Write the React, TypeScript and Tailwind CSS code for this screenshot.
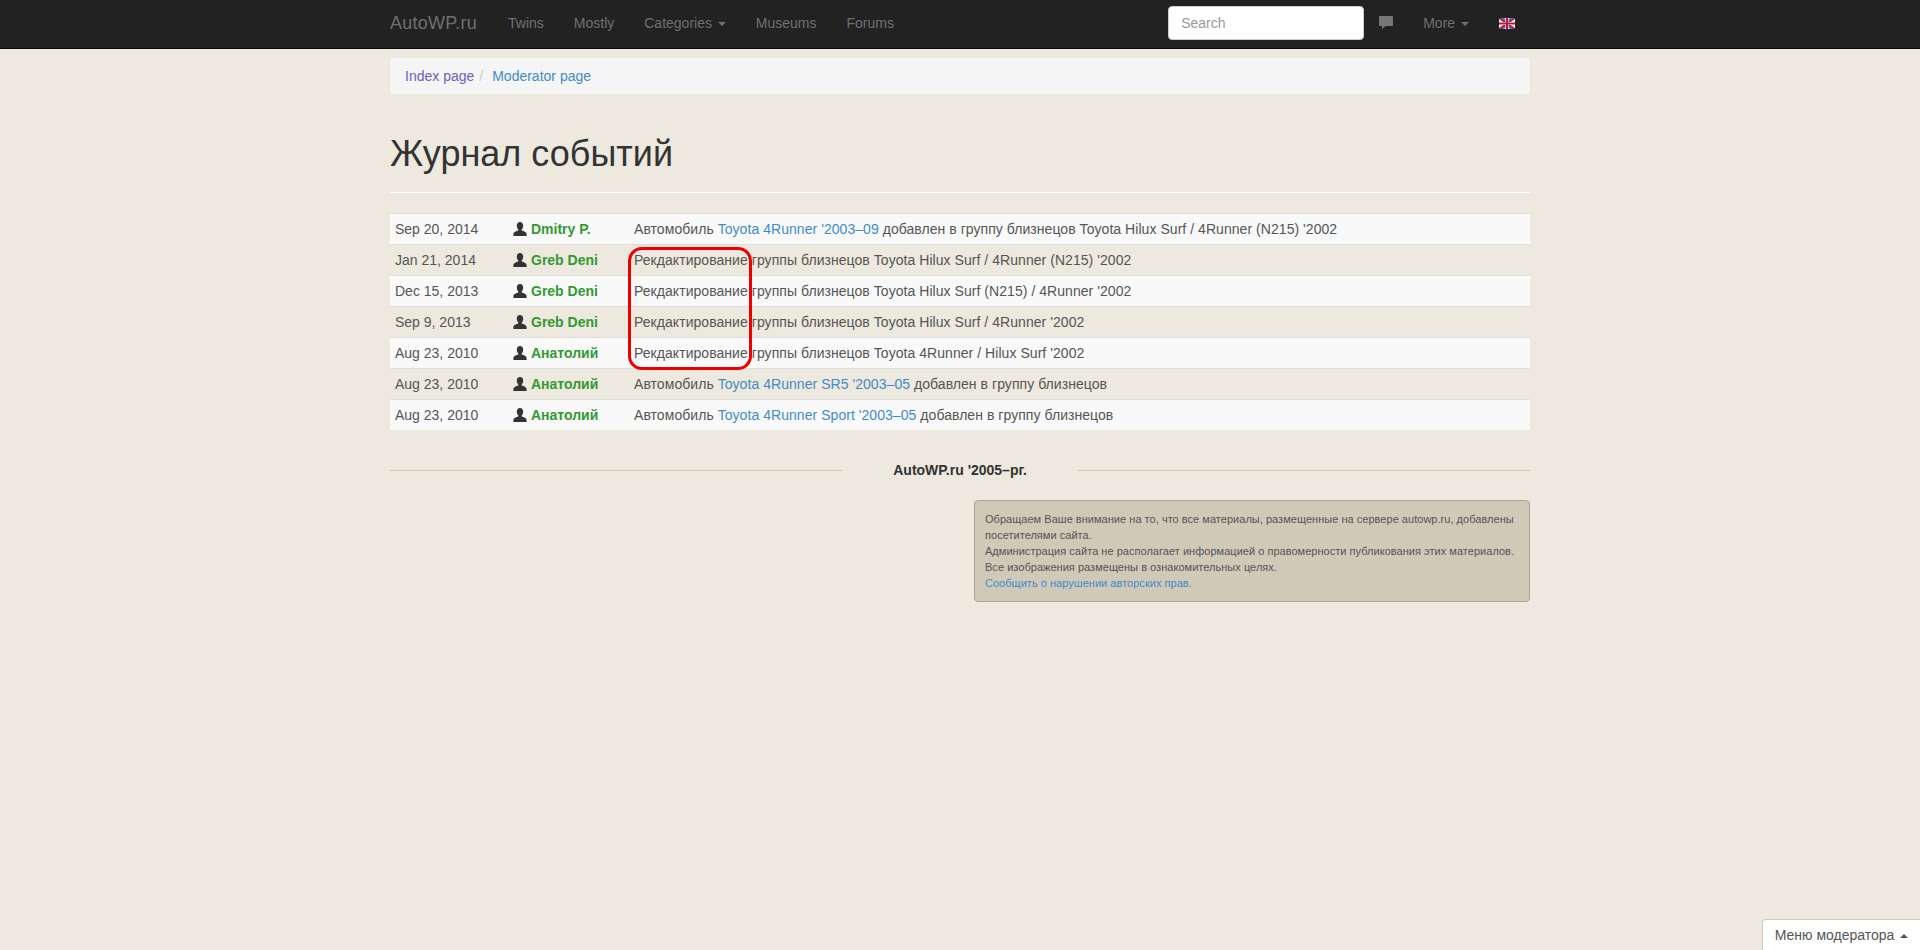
const events = [
  { date: "Sep 20, 2014", user: "Dmitry P.", before: "Автомобиль ", link: "Toyota 4Runner '2003–09", after: " добавлен в группу близнецов Toyota Hilux Surf / 4Runner (N215) '2002" },
  { date: "Jan 21, 2014", user: "Greb Deni", before: "Рекдактирование группы близнецов Toyota Hilux Surf / 4Runner (N215) '2002" },
  { date: "Dec 15, 2013", user: "Greb Deni", before: "Рекдактирование группы близнецов Toyota Hilux Surf (N215) / 4Runner '2002" },
  { date: "Sep 9, 2013", user: "Greb Deni", before: "Рекдактирование группы близнецов Toyota Hilux Surf / 4Runner '2002" },
  { date: "Aug 23, 2010", user: "Анатолий", before: "Рекдактирование группы близнецов Toyota 4Runner / Hilux Surf '2002" },
  { date: "Aug 23, 2010", user: "Анатолий", before: "Автомобиль ", link: "Toyota 4Runner SR5 '2003–05", after: " добавлен в группу близнецов" },
  { date: "Aug 23, 2010", user: "Анатолий", before: "Автомобиль ", link: "Toyota 4Runner Sport '2003–05", after: " добавлен в группу близнецов" },
]

function Caret({ up = false }: { up?: boolean }) {
  return (
    <span
      className={
        up
          ? "ml-[6px] inline-block align-middle border-x-4 border-x-transparent border-b-4 border-b-current"
          : "ml-[2px] inline-block align-middle border-x-4 border-x-transparent border-t-4 border-t-current"
      }
    />
  )
}

function UserIcon() {
  return (
    <svg viewBox="0 0 14 14" className="inline-block w-[14px] h-[14px] mr-[4px] -mt-[3px] align-middle fill-[#333333]">
      <path d="M7 0C5 0 3.8 1.6 3.8 3.8c0 1.5.6 2.8 1.5 3.6v1.2C3.2 9.2.4 10.2.4 12.2V14h13.2v-1.8c0-2-2.8-3-4.9-3.6V7.4c.9-.8 1.5-2.1 1.5-3.6C10.2 1.6 9 0 7 0z" />
    </svg>
  )
}

function UkFlag() {
  return (
    <svg viewBox="0 0 16 11" className="w-4 h-[11px]">
      <rect width="16" height="11" fill="#ffffff" />
      <path d="M0 0L16 11M16 0L0 11" stroke="#c8102e" strokeWidth="1.6" />
      <path d="M1 0h4l3 2 3-2h4L10 4.5h6v2h-6L15 11h-4L8 9l-3 2H1l5-4.5H0v-2h6z" fill="#2b3f8f" opacity="0.75" />
      <path d="M6.5 0h3v4h6.5v3H9.5v4h-3V7H0V4h6.5z" fill="#ffffff" />
      <path d="M7 0h2v4.5h7v2H9V11H7V6.5H0v-2h7z" fill="#c8102e" />
    </svg>
  )
}

export default function App() {
  return (
    <div className="min-h-screen bg-[#ede9de] text-[14px] leading-[20px] text-[#555555] font-['Liberation_Sans',Arial,sans-serif]">

      {/* navbar */}
      <nav className="h-[49px] bg-[#222222] border-b border-[#080808]">
        <div className="w-[1140px] mx-auto h-full pb-[2px] flex items-center text-[#707070]">
          <a className="w-[87px] text-[18px] tracking-[0.25px] mr-[16px]">AutoWP.ru</a>
          <a className="px-[15px]">Twins</a>
          <a className="px-[15px]">Mostly</a>
          <a className="px-[15px]">Categories <Caret /></a>
          <a className="px-[15px]">Museums</a>
          <a className="px-[15px]">Forums</a>
          <div className="ml-auto flex items-center">
            <input
              placeholder="Search"
              className="w-[196px] h-[34px] px-[12px] bg-white rounded border border-[#cccccc] text-[14px] placeholder:text-[#999999] outline-none"
            />
            <a className="ml-[15px] mr-[15px] -mt-[2px]">
              <svg viewBox="0 0 14 13" className="w-[14px] h-[13px] fill-[#777777]">
                <path d="M1 0h12a1 1 0 0 1 1 1v8a1 1 0 0 1-1 1H6.5L3 13v-3H1a1 1 0 0 1-1-1V1a1 1 0 0 1 1-1z" />
              </svg>
            </a>
            <a className="px-[15px]">More <Caret /></a>
            <a className="ml-[15px] mr-[15px] mt-[1px]"><UkFlag /></a>
          </div>
        </div>
      </nav>

      <div className="w-[1140px] mx-auto">

        {/* breadcrumb */}
        <div className="mt-[9px] h-[36px] px-[15px] py-[8px] bg-[#f5f5f5] rounded flex">
          <a className="text-[#6f5fc0]">Index page</a>
          <span className="px-[5px] text-[#cccccc]">/</span>
          <a className="ml-[4px] text-[#428bca]">Moderator page</a>
        </div>

        <h1 className="mt-[40px] pb-[18px] mb-[20px] border-b border-white text-[36px] leading-[40px] text-[#333333]">
          Журнал событий
        </h1>

        {/* events */}
        <div className="relative">
          <table className="w-full table-fixed border-collapse">
            <colgroup>
              <col className="w-[118px]" />
              <col className="w-[121px]" />
              <col />
            </colgroup>
            <tbody>
              {events.map((e, i) => (
                <tr key={i} className="odd:bg-[#f9f9f9] border-t border-[#dddddd]">
                  <td className="p-[5px]">{e.date}</td>
                  <td className="p-[5px]">
                    <UserIcon />
                    <a className="font-bold text-[#339933]">{e.user}</a>
                  </td>
                  <td className="p-[5px] tracking-[0.05px]">
                    {e.before}
                    {e.link && <a className="text-[#428bca]">{e.link}</a>}
                    {e.after}
                  </td>
                </tr>
              ))}
            </tbody>
          </table>
          {/* annotation */}
          <div className="absolute left-[238px] top-[34px] w-[124px] h-[123px] border-[3px] border-[#ee0000] rounded-[14px]" />
        </div>

        {/* footer */}
        <div className="mt-[30px] flex items-center">
          <div className="flex-1 h-px bg-[#d0c9b8]" />
          <strong className="px-[51px] text-[#333333]">AutoWP.ru '2005–рг.</strong>
          <div className="flex-1 h-px bg-[#d0c9b8]" />
        </div>

        <div className="mt-[20px] flex justify-end">
          <div className="w-[556px] p-[10px] bg-[#d0c9b8] border border-[#aaa69a] rounded text-[11px] leading-[16px] tracking-[0.03px]">
            Обращаем Ваше внимание на то, что все материалы, размещенные на сервере autowp.ru, добавлены посетителями сайта.
            <br />
            Администрация сайта не располагает информацией о правомерности публикования этих материалов.
            <br />
            Все изображения размещены в ознакомительных целях.
            <br />
            <a className="text-[#428bca]">Сообщить о нарушении авторских прав.</a>
          </div>
        </div>
      </div>

      {/* moderator menu */}
      <button className="fixed right-0 bottom-0 h-[31px] w-[158px] bg-white border-t border-l border-[#cccccc] rounded-tl text-[14px] text-[#555555]">
        Меню модератора<Caret up />
      </button>
    </div>
  )
}
